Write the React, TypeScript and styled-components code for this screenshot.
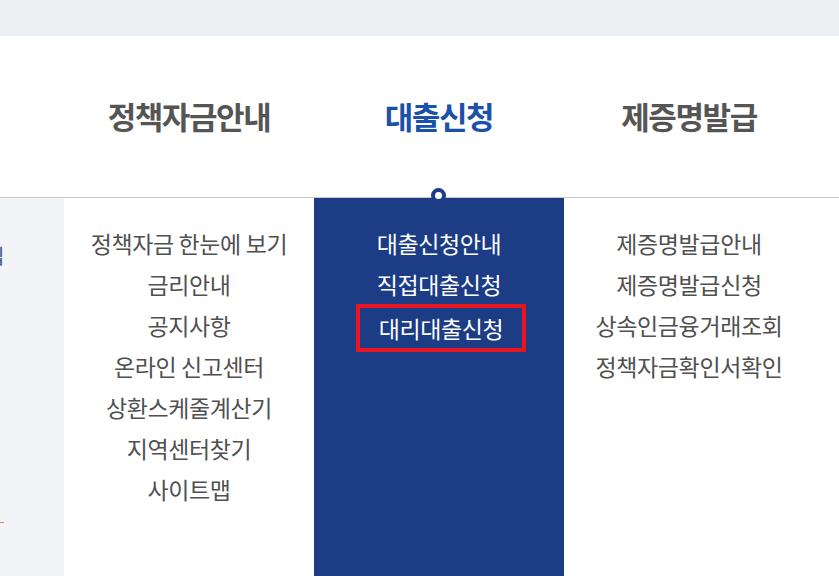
import styled, { createGlobalStyle } from 'styled-components';

const GlobalStyle = createGlobalStyle`
  html, body {
    margin: 0;
    padding: 0;
    background: #ffffff;
  }
  body {
    font-family: "Noto Sans CJK KR", "Noto Sans", sans-serif;
    overflow: hidden;
  }
`;

const Page = styled.div`
  width: 839px;
  height: 576px;
  overflow: hidden;
  display: flex;
  flex-direction: column;
`;

const TopBar = styled.div`
  height: 36px;
  background: #edf0f3;
  flex-shrink: 0;
`;

const Header = styled.nav`
  height: 161px;
  display: flex;
  padding-left: 64px;
  border-bottom: 1px solid #c9c9c9;
  flex-shrink: 0;
`;

const HeadItem = styled.div<{ $active?: boolean }>`
  width: 250px;
  display: flex;
  align-items: center;
  justify-content: center;
  font-size: 31px;
  font-weight: 700;
  letter-spacing: -1.4px;
  color: ${(p) => (p.$active ? '#1b51a8' : '#555555')};
  padding-bottom: 3px;
`;

const Dropdown = styled.div`
  flex: 1;
  display: flex;
`;

const SideStrip = styled.div`
  width: 64px;
  background: #f3f4f8;
  overflow: hidden;
  display: flex;
  flex-direction: column;
  flex-shrink: 0;
`;

const ClippedGlyph = styled.span`
  margin-top: 46px;
  margin-left: -14px;
  font-size: 20px;
  line-height: 24px;
  color: #3d5a8c;
`;

const Dash = styled.span`
  margin-top: 254px;
  width: 4px;
  height: 1px;
  background: #e0806a;
`;

const Column = styled.ul<{ $active?: boolean }>`
  width: 250px;
  margin: 0;
  padding: 25px 0 0;
  list-style: none;
  display: flex;
  flex-direction: column;
  align-items: center;
  position: relative;
  background: ${(p) => (p.$active ? '#1c3c85' : 'transparent')};
`;

const Pin = styled.span`
  position: absolute;
  top: -10px;
  left: 117px;
  width: 7px;
  height: 7px;
  border: 4px solid #1c3c85;
  border-radius: 50%;
  background: #ffffff;
`;

const SubItem = styled.li<{ $light?: boolean; $boxed?: boolean }>`
  font-size: 23px;
  line-height: 41px;
  height: 41px;
  letter-spacing: -0.4px;
  color: ${(p) => (p.$light ? '#ffffff' : '#505050')};
  white-space: nowrap;
  box-sizing: border-box;
  ${(p) =>
    p.$boxed &&
    `
    border: 4px solid #e8141e;
    width: 170px;
    height: 48px;
    line-height: 40px;
    margin-top: -1px;
    margin-left: 4px;
    text-align: center;
  `}
`;

const columns: { items: string[]; active?: boolean }[] = [
  {
    items: [
      '정책자금 한눈에 보기',
      '금리안내',
      '공지사항',
      '온라인 신고센터',
      '상환스케줄계산기',
      '지역센터찾기',
      '사이트맵',
    ],
  },
  { items: ['대출신청안내', '직접대출신청', '대리대출신청'], active: true },
  { items: ['제증명발급안내', '제증명발급신청', '상속인금융거래조회', '정책자금확인서확인'] },
];

const heads = ['정책자금안내', '대출신청', '제증명발급'];

export default function App() {
  return (
    <Page>
      <GlobalStyle />
      <TopBar />
      <Header>
        {heads.map((h, i) => (
          <HeadItem key={h} $active={i === 1}>
            {h}
          </HeadItem>
        ))}
      </Header>
      <Dropdown>
        <SideStrip>
          <ClippedGlyph>입</ClippedGlyph>
          <Dash />
        </SideStrip>
        {columns.map((col, ci) => (
          <Column key={ci} $active={col.active}>
            {col.active && <Pin />}
            {col.items.map((t) => (
              <SubItem key={t} $light={col.active} $boxed={t === '대리대출신청'}>
                {t}
              </SubItem>
            ))}
          </Column>
        ))}
      </Dropdown>
    </Page>
  );
}
